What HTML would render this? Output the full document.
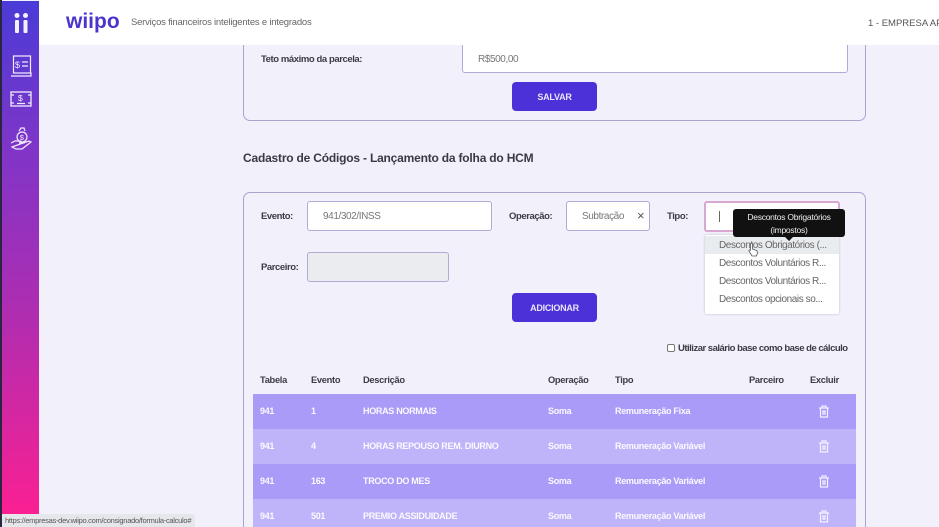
<!DOCTYPE html>
<html><head><meta charset="utf-8">
<style>
*{box-sizing:border-box}
html,body{margin:0;padding:0;width:939px;height:527px;overflow:hidden;background:#f2f0fb;font-family:"Liberation Sans",sans-serif}
#p{position:absolute;left:0;top:0;width:939px;height:527px;overflow:hidden;background:#f2f0fb}
.a{position:absolute;white-space:nowrap}
.box{position:absolute;border:1px solid #a9a3cf}
.inp{position:absolute;background:#fff;border:1.3px solid #b0aad6;border-radius:3px;color:#777;font-size:10px;letter-spacing:-.4px}
.lb{position:absolute;font-size:9.5px;font-weight:bold;color:#3c3c42;white-space:nowrap;letter-spacing:-.42px}
.btn{position:absolute;left:512px;width:85px;height:29px;background:#4c30d8;border-radius:4px;color:#e8e4fb;font-size:9px;font-weight:bold;text-align:center;line-height:30px;letter-spacing:-.25px}
.th{position:absolute;top:374.500px;font-size:9.300px;font-weight:bold;color:#3c3c42;white-space:nowrap;letter-spacing:-.3px}
.row{position:absolute;left:253px;width:603px;height:35px;color:#fbfaff;font-size:9px;font-weight:bold;letter-spacing:-.3px}
.row span{position:absolute;top:12px;white-space:nowrap}
.row svg{position:absolute;left:565px;top:11px}
.dd{position:absolute;left:14px;font-size:10px;color:#666;white-space:nowrap;letter-spacing:-.42px}
</style></head><body><div id="p">
<div class="a" style="left:0;top:0;width:2px;height:527px;background:#2a2540"></div>
<div class="a" style="left:2px;top:1px;width:37px;height:526px;background:linear-gradient(180deg,#4a3bd6 0%,#7f35c8 28%,#b02db0 60%,#ff1f90 100%)"></div>
<div class="a" style="left:39px;top:0;width:900px;height:45px;background:#fff"></div>
<div class="a" style="left:15px;top:20px;width:4px;height:13px;background:#f3f0ff;border-radius:1px;box-shadow:8.500px 0 0 #f3f0ff"></div>
<svg class="a" style="left:9px;top:12px" width="24" height="7"><circle cx="8" cy="3.500" r="2.500" fill="#f3f0ff"/><circle cx="16.500" cy="3.500" r="2.500" fill="#f3f0ff"/></svg>
<svg class="a" style="left:10px;top:54px" width="22" height="24" fill="none" stroke="#f0eafd" stroke-width="1.200"><path d="M3.500 2h17v17h-17zM1 22h20v-3H3"/><path d="M12 8h6M12 12h6"/><text x="5" y="14" font-size="9" font-family="Liberation Sans" fill="#f0eafd" stroke="none">$</text></svg>
<svg class="a" style="left:10px;top:90px" width="22" height="18" fill="none" stroke="#f0eafd" stroke-width="1.300"><rect x="1" y="2" width="20" height="14"/><path d="M1 5h3M18 5h3M1 13h3M18 13h3M7 13.500h8"/><text x="8" y="11" font-size="8.500" font-family="Liberation Sans" fill="#f0eafd" stroke="none">$</text></svg>
<svg class="a" style="left:9px;top:126px" width="24" height="26" fill="none" stroke="#f0eafd" stroke-width="1.200"><circle cx="13" cy="11" r="5"/><path d="M10 5l2-3h3l1 3M2 17l4-2h5l3 2h-4M14 17l6-2 2 1-9 7H7l-4-2z"/><text x="10.800" y="14" font-size="7.500" font-family="Liberation Sans" fill="#f0eafd" stroke="none">$</text></svg>

<div class="box" style="left:243px;top:30px;width:623px;height:91px;border-radius:7px"></div>
<div class="a" style="left:39px;top:30px;width:900px;height:15px;background:#fff"></div>
<div class="a" style="left:66px;top:10px;font-size:21px;font-weight:bold;color:#4a36cc">wiipo</div>
<div class="a" style="left:131px;top:17px;font-size:9.500px;color:#666;letter-spacing:-.22px">Serviços financeiros inteligentes e integrados</div>
<div class="a" style="left:868px;top:18px;font-size:9.500px;color:#555">1 - EMPRESA APR</div>
<div class="lb" style="left:261px;top:54px">Teto máximo da parcela:</div>
<div class="inp" style="left:462px;top:45px;width:386px;height:28px;border-top:0;border-radius:0 0 3px 3px;padding:9px 0 0 15px">R$500,00</div>
<div class="btn" style="top:82px">SALVAR</div>
<div class="a" style="left:243px;top:151px;font-size:12px;font-weight:bold;color:#3a3a40;letter-spacing:-.2px">Cadastro de Códigos - Lançamento da folha do HCM</div>

<div class="box" style="left:243px;top:192px;width:623px;height:345px;border-radius:7px"></div>
<div class="lb" style="left:261px;top:211px">Evento:</div>
<div class="inp" style="left:307px;top:201px;width:185px;height:30px;padding:9px 0 0 15px">941/302/INSS</div>
<div class="lb" style="left:509px;top:211px">Operação:</div>
<div class="inp" style="left:566px;top:201px;width:84px;height:30px;padding:9px 0 0 15px">Subtração<span style="position:absolute;left:70px;top:6px;font-size:13px;color:#555">×</span></div>
<div class="lb" style="left:667px;top:211px">Tipo:</div>
<div class="inp" style="left:704px;top:201px;width:136px;height:31px;border:2px solid #d9a8d0"></div>
<div class="a" style="left:719px;top:211px;width:1px;height:11px;background:#666"></div>
<div class="lb" style="left:261px;top:262px">Parceiro:</div>
<div class="inp" style="left:307px;top:252px;width:142px;height:30px;background:#ebecf0"></div>
<div class="btn" style="top:293px">ADICIONAR</div>

<div class="a" style="left:705px;top:235px;width:134px;height:79px;background:#fff;box-shadow:0 0 2px rgba(90,80,130,.35);border-radius:2px">
<div class="a" style="left:0;top:1px;width:134px;height:18px;background:#e9ecef"></div>
<div class="dd" style="top:5px">Descontos Obrigatórios (...</div>
<div class="dd" style="top:23px">Descontos Voluntários R...</div>
<div class="dd" style="top:41px">Descontos Voluntários R...</div>
<div class="dd" style="top:59px">Descontos opcionais so...</div>
</div>
<div class="a" style="left:733px;top:209px;width:112px;height:28px;background:#111;border-radius:3px;color:#eee;font-size:8.500px;letter-spacing:-.25px;text-align:center;line-height:12.500px;padding-top:2px;white-space:normal">Descontos Obrigatórios<br>(impostos)</div>
<div class="a" style="left:785px;top:237px;border:4px solid transparent;border-top-color:#111;border-bottom:0"></div>
<svg class="a" style="left:748px;top:242px" width="11" height="15"><path d="M3 1.500c1-.5 1.500 0 1.500 1V7l4 1.500c1 .5 1 1.500.8 3L8.500 14H4L1 9c-.3-1 .5-1.500 1.500-.8V2.500c0-.5.2-.8.500-1z" fill="#fff" stroke="#555" stroke-width=".8"/></svg>

<div class="a" style="left:667px;top:344px;width:8px;height:8px;background:#fff;border:1px solid #777;border-radius:2px"></div>
<div class="lb" style="left:678px;top:343px;font-size:9.500px;letter-spacing:-.5px">Utilizar salário base como base de cálculo</div>

<div class="th" style="left:260px">Tabela</div>
<div class="th" style="left:311px">Evento</div>
<div class="th" style="left:363px">Descrição</div>
<div class="th" style="left:548px">Operação</div>
<div class="th" style="left:615px">Tipo</div>
<div class="th" style="left:749px">Parceiro</div>
<div class="th" style="left:810px">Excluir</div>

<div class="row" style="top:394px;background:#a99bf7"><span style="left:7px">941</span><span style="left:58px">1</span><span style="left:110px">HORAS NORMAIS</span><span style="left:295px">Soma</span><span style="left:362px">Remuneração Fixa</span><svg width="12" height="13" fill="none" stroke="#f3f0ff" stroke-width="1.200"><path d="M1 3h10M4 3V1h4v2M2.500 3v9h7V3M5 6v3h2V6z"/></svg></div>
<div class="row" style="top:429px;background:#bfb4fa"><span style="left:7px">941</span><span style="left:58px">4</span><span style="left:110px">HORAS REPOUSO REM. DIURNO</span><span style="left:295px">Soma</span><span style="left:362px">Remuneração Variável</span><svg width="12" height="13" fill="none" stroke="#f3f0ff" stroke-width="1.200"><path d="M1 3h10M4 3V1h4v2M2.500 3v9h7V3M5 6v3h2V6z"/></svg></div>
<div class="row" style="top:464px;background:#a99bf7"><span style="left:7px">941</span><span style="left:58px">163</span><span style="left:110px">TROCO DO MES</span><span style="left:295px">Soma</span><span style="left:362px">Remuneração Variável</span><svg width="12" height="13" fill="none" stroke="#f3f0ff" stroke-width="1.200"><path d="M1 3h10M4 3V1h4v2M2.500 3v9h7V3M5 6v3h2V6z"/></svg></div>
<div class="row" style="top:499px;background:#bfb4fa"><span style="left:7px">941</span><span style="left:58px">501</span><span style="left:110px">PREMIO ASSIDUIDADE</span><span style="left:295px">Soma</span><span style="left:362px">Remuneração Variável</span><svg width="12" height="13" fill="none" stroke="#f3f0ff" stroke-width="1.200"><path d="M1 3h10M4 3V1h4v2M2.500 3v9h7V3M5 6v3h2V6z"/></svg></div>

<div class="a" style="left:2px;top:514px;width:193px;height:13px;background:#e6e7ea;border-radius:0 3px 0 0;font-size:7.500px;letter-spacing:-.28px;color:#555;padding:2px 0 0 3px">https://empresas-dev.wiipo.com/consignado/formula-calculo#</div>
</div></body></html>
